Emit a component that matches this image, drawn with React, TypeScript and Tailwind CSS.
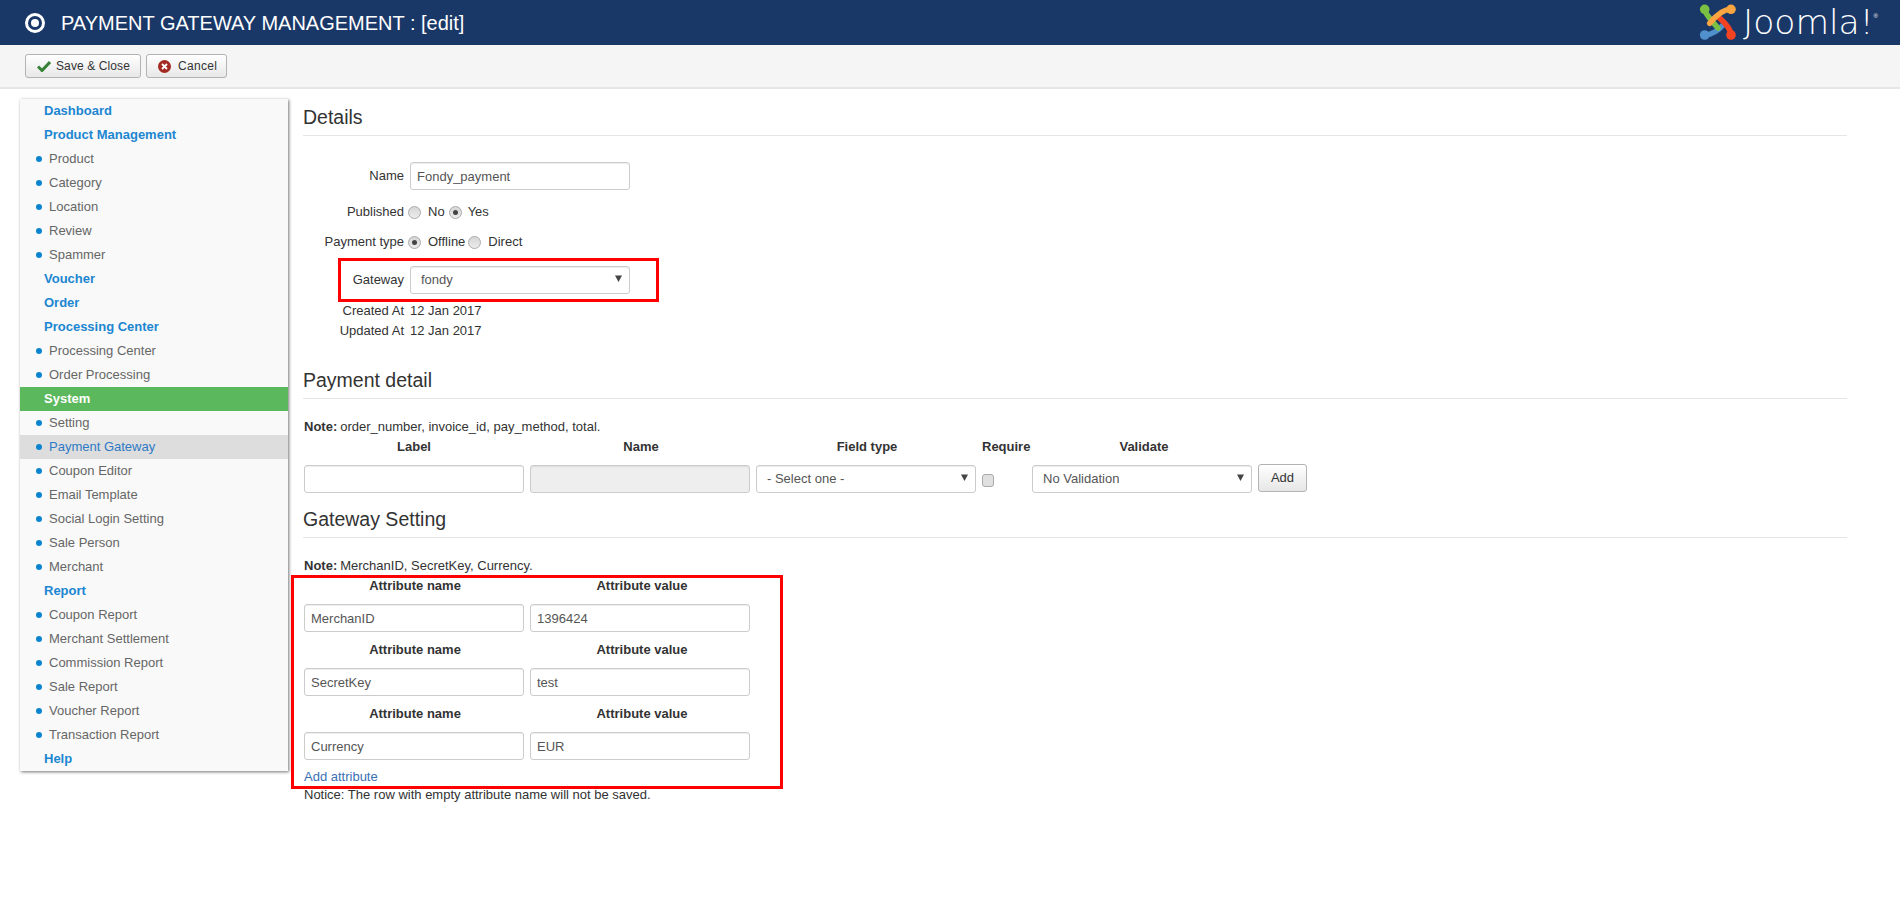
import React from "react";

const menu: [string, "head" | "sub" | "active" | "current"][] = [
  ["Dashboard", "head"],
  ["Product Management", "head"],
  ["Product", "sub"],
  ["Category", "sub"],
  ["Location", "sub"],
  ["Review", "sub"],
  ["Spammer", "sub"],
  ["Voucher", "head"],
  ["Order", "head"],
  ["Processing Center", "head"],
  ["Processing Center", "sub"],
  ["Order Processing", "sub"],
  ["System", "active"],
  ["Setting", "sub"],
  ["Payment Gateway", "current"],
  ["Coupon Editor", "sub"],
  ["Email Template", "sub"],
  ["Social Login Setting", "sub"],
  ["Sale Person", "sub"],
  ["Merchant", "sub"],
  ["Report", "head"],
  ["Coupon Report", "sub"],
  ["Merchant Settlement", "sub"],
  ["Commission Report", "sub"],
  ["Sale Report", "sub"],
  ["Voucher Report", "sub"],
  ["Transaction Report", "sub"],
  ["Help", "head"],
];

function MenuRow({ label, kind }: { label: string; kind: string }) {
  if (kind === "head" || kind === "active") {
    return (
      <div
        className={
          "h-6 pl-[24px] flex items-center font-bold " +
          (kind === "active" ? "bg-[#5cb85c] text-white" : "text-[#1c86d1]")
        }
      >
        {label}
      </div>
    );
  }
  return (
    <div
      className={
        "h-6 pl-4 flex items-center " +
        (kind === "current" ? "bg-[#dddddd] text-[#2f7ac6]" : "text-[#666666]")
      }
    >
      <span className="w-[6px] h-[6px] rounded-full bg-[#0a84d0] mr-[7px]" />
      {label}
    </div>
  );
}

function TextField({ value = "", disabled = false, className = "" }: { value?: string; disabled?: boolean; className?: string }) {
  return (
    <input
      readOnly
      value={value}
      className={
        "w-[220px] h-[28px] px-[6px] border border-[#cccccc] rounded-[3px] text-[13px] text-[#555555] shadow-[inset_0_1px_1px_rgba(0,0,0,0.075)] outline-none " +
        (disabled ? "bg-[#eeeeee] " : "bg-white ") +
        className
      }
    />
  );
}

function SelectBox({ value, className = "" }: { value: string; className?: string }) {
  return (
    <div className={"w-[220px] h-[28px] pl-[10px] pr-[7px] border border-[#cccccc] rounded-[3px] bg-white text-[#555555] flex items-center justify-between shadow-[inset_0_1px_1px_rgba(0,0,0,0.075)] " + className}>
      <span>{value}</span>
      <svg width="7" height="7" viewBox="0 0 7 7" className="mb-[3px]">
        <path d="M0 0.5H7L3.5 7Z" fill="#444444" />
      </svg>
    </div>
  );
}

function Radio({ on = false }: { on?: boolean }) {
  return (
    <span className="w-[13px] h-[13px] rounded-full border border-[#aaaaaa] bg-gradient-to-b from-[#d6d6d6] to-[#ececec] flex items-center justify-center shrink-0 mt-[1px]">
      {on && <span className="w-[5px] h-[5px] rounded-full bg-[#444444]" />}
    </span>
  );
}

function Heading({ children, className = "" }: { children: React.ReactNode; className?: string }) {
  return (
    <h2 className={"h-[38px] leading-[38px] text-[19.5px] text-[#333333] border-b border-[#e5e5e5] " + className}>
      {children}
    </h2>
  );
}

function FormRow({ label, children, className = "" }: { label: string; children: React.ReactNode; className?: string }) {
  return (
    <div className={"flex items-center " + className}>
      <div className="w-[101px] text-right mr-[4px] text-[#333333]">{label}</div>
      {children}
    </div>
  );
}

function AttrRow({ name, value, className = "" }: { name: string; value: string; className?: string }) {
  return (
    <div className={className}>
      <div className="flex gap-[6px] h-5 items-center font-bold text-[#333333] text-center">
        <div className="w-[220px] pl-[2px]">Attribute name</div>
        <div className="w-[220px] pl-[4px]">Attribute value</div>
      </div>
      <div className="flex gap-[6px] mt-2">
        <TextField value={name} />
        <TextField value={value} />
      </div>
    </div>
  );
}

function JoomlaMark() {
  return (
    <svg width="38" height="38" viewBox="0 0 38 38" fill="none" strokeLinecap="round" strokeLinejoin="round">
      <path d="M5.7 32 Q15.7 32 25.7 20.3" stroke="#5091cd" strokeWidth="5.5" />
      <circle cx="5.7" cy="32" r="4.8" fill="#5091cd" />
      <path d="M32 32 Q32 25 19 13.7" stroke="#f44321" strokeWidth="5.5" />
      <circle cx="32" cy="32" r="4.8" fill="#f44321" />
      <path d="M5.7 6.3 Q6 11 19 25" stroke="#7ac143" strokeWidth="5.5" />
      <circle cx="5.7" cy="6.3" r="4.8" fill="#7ac143" />
      <path d="M32 6.3 Q22 6.3 10.7 20.3" stroke="#f9a541" strokeWidth="5.5" />
      <circle cx="32" cy="6.3" r="4.8" fill="#f9a541" />
    </svg>
  );
}

export default function App() {
  return (
    <div className="min-h-[913px] bg-white text-[13px] text-[#333333] font-['Liberation_Sans',Arial,sans-serif]">
      {/* Title bar */}
      <header className="h-[45px] bg-[#1a3867] flex items-center justify-between pl-[25px] pr-[22px] text-white">
        <div className="flex items-center">
          <span className="w-[20px] h-[20px] rounded-full border-[3px] border-white flex items-center justify-center mr-[16px]">
            <span className="w-[8px] h-[8px] rounded-full bg-white" />
          </span>
          <span className="text-[20px] leading-none">PAYMENT GATEWAY MANAGEMENT : [edit]</span>
        </div>
        <div className="flex items-center mt-[-1px]">
          <JoomlaMark />
          <span className="ml-[6px] text-[34.5px] leading-none font-extralight font-['DejaVu_Sans',sans-serif]">Joomla!</span>
          <span className="text-[6px] leading-none self-start mt-[10px]">®</span>
        </div>
      </header>

      {/* Toolbar */}
      <div className="h-[44px] bg-[#f5f5f5] border-b-2 border-[#e6e6e6] pl-[25px] pt-[9px] flex gap-[5px] items-start">
        <button className="h-[24px] w-[116px] border border-[#b3b3b3] rounded-[3px] bg-gradient-to-b from-white to-[#e8e8e8] flex items-center pl-[11px] text-[12px] text-[#333333] tracking-[0.1px]">
          <svg width="14" height="12" viewBox="0 0 14 12" className="mr-[5px]">
            <path d="M1 6.5 L5 10.5 L13 2" fill="none" stroke="#378137" strokeWidth="3" />
          </svg>
          Save &amp; Close
        </button>
        <button className="h-[24px] w-[81px] border border-[#b3b3b3] rounded-[3px] bg-gradient-to-b from-white to-[#e8e8e8] flex items-center pl-[11px] text-[12px] text-[#333333] tracking-[0.3px]">
          <svg width="13" height="13" viewBox="0 0 13 13" className="mr-[7px]">
            <circle cx="6.5" cy="6.5" r="6.5" fill="#a32a22" />
            <path d="M4 4 L9 9 M9 4 L4 9" stroke="#ffffff" strokeWidth="1.8" />
          </svg>
          Cancel
        </button>
      </div>

      {/* Body */}
      <div className="flex pl-5 pt-[10px] items-start">
        <nav className="w-[268px] bg-[#f9f9f9] shadow-[1px_1px_3px_rgba(0,0,0,0.55)] shrink-0">
          {menu.map(([label, kind], i) => (
            <MenuRow key={i} label={label} kind={kind} />
          ))}
        </nav>

        <main className="ml-[15px] w-[1544px] mt-[-1px]">
          <div className="relative">
            <Heading>Details</Heading>

            <FormRow label="Name" className="mt-[26px]">
              <TextField value="Fondy_payment" className="ml-[2px]" />
            </FormRow>

            <FormRow label="Published" className="h-5 mt-3">
              <Radio />
              <span className="ml-[7px] mr-[4px]">No</span>
              <Radio on />
              <span className="ml-[6px]">Yes</span>
            </FormRow>

            <FormRow label="Payment type" className="h-5 mt-[10px]">
              <Radio on />
              <span className="ml-[7px] mr-[3px]">Offline</span>
              <Radio />
              <span className="ml-[7px]">Direct</span>
            </FormRow>

            <FormRow label="Gateway" className="mt-[14px]">
              <SelectBox value="fondy" className="ml-[2px]" />
            </FormRow>

            <FormRow label="Created At" className="h-5 mt-[7px]">
              <span className="ml-[2px]">12 Jan 2017</span>
            </FormRow>
            <FormRow label="Updated At" className="h-5">
              <span className="ml-[2px]">12 Jan 2017</span>
            </FormRow>

            <Heading className="mt-[20px]">Payment detail</Heading>

            <div className="pl-px">
              <div className="h-5 flex items-center mt-[18px]">
                <b className="mr-[3px]">Note:</b> order_number, invoice_id, pay_method, total.
              </div>
              <div className="flex gap-[6px] h-5 items-center font-bold text-center">
                <div className="w-[220px]">Label</div>
                <div className="w-[220px] pl-[2px]">Name</div>
                <div className="w-[220px] pl-[2px]">Field type</div>
                <div className="w-[44px] text-left">Require</div>
                <div className="w-[220px] pl-[4px]">Validate</div>
              </div>
              <div className="flex gap-[6px] mt-2 items-start">
                <TextField />
                <TextField disabled />
                <SelectBox value="- Select one -" />
                <div className="w-[44px] pt-[9px]">
                  <span className="block w-[12px] h-[13px] border border-[#aaaaaa] rounded-[3px] bg-[#e0e0e0]" />
                </div>
                <SelectBox value="No Validation" />
                <button className="w-[49px] h-[28px] mt-[-1px] border border-[#b3b3b3] rounded-[3px] bg-gradient-to-b from-white to-[#e6e6e6] text-[#333333]">
                  Add
                </button>
              </div>
            </div>

            <Heading className="mt-[7px]">Gateway Setting</Heading>

            <div className="pl-px">
              <div className="h-5 flex items-center mt-[18px]">
                <b className="mr-[3px]">Note:</b> MerchanID, SecretKey, Currency.
              </div>
              <AttrRow name="MerchanID" value="1396424" />
              <AttrRow name="SecretKey" value="test" className="mt-2" />
              <AttrRow name="Currency" value="EUR" className="mt-2" />
              <div className="h-[18px] leading-[18px] mt-2 text-[#3b70b5]">Add attribute</div>
              <div className="h-[18px] leading-[18px]">Notice: The row with empty attribute name will not be saved.</div>
            </div>

            {/* Red annotation boxes */}
            <div className="absolute left-[35px] top-[160px] w-[321px] h-[44px] border-[3px] border-[#ff0000] pointer-events-none" />
            <div className="absolute left-[-12px] top-[477px] w-[492px] h-[214px] border-[3px] border-[#ff0000] pointer-events-none" />
          </div>
        </main>
      </div>
    </div>
  );
}
